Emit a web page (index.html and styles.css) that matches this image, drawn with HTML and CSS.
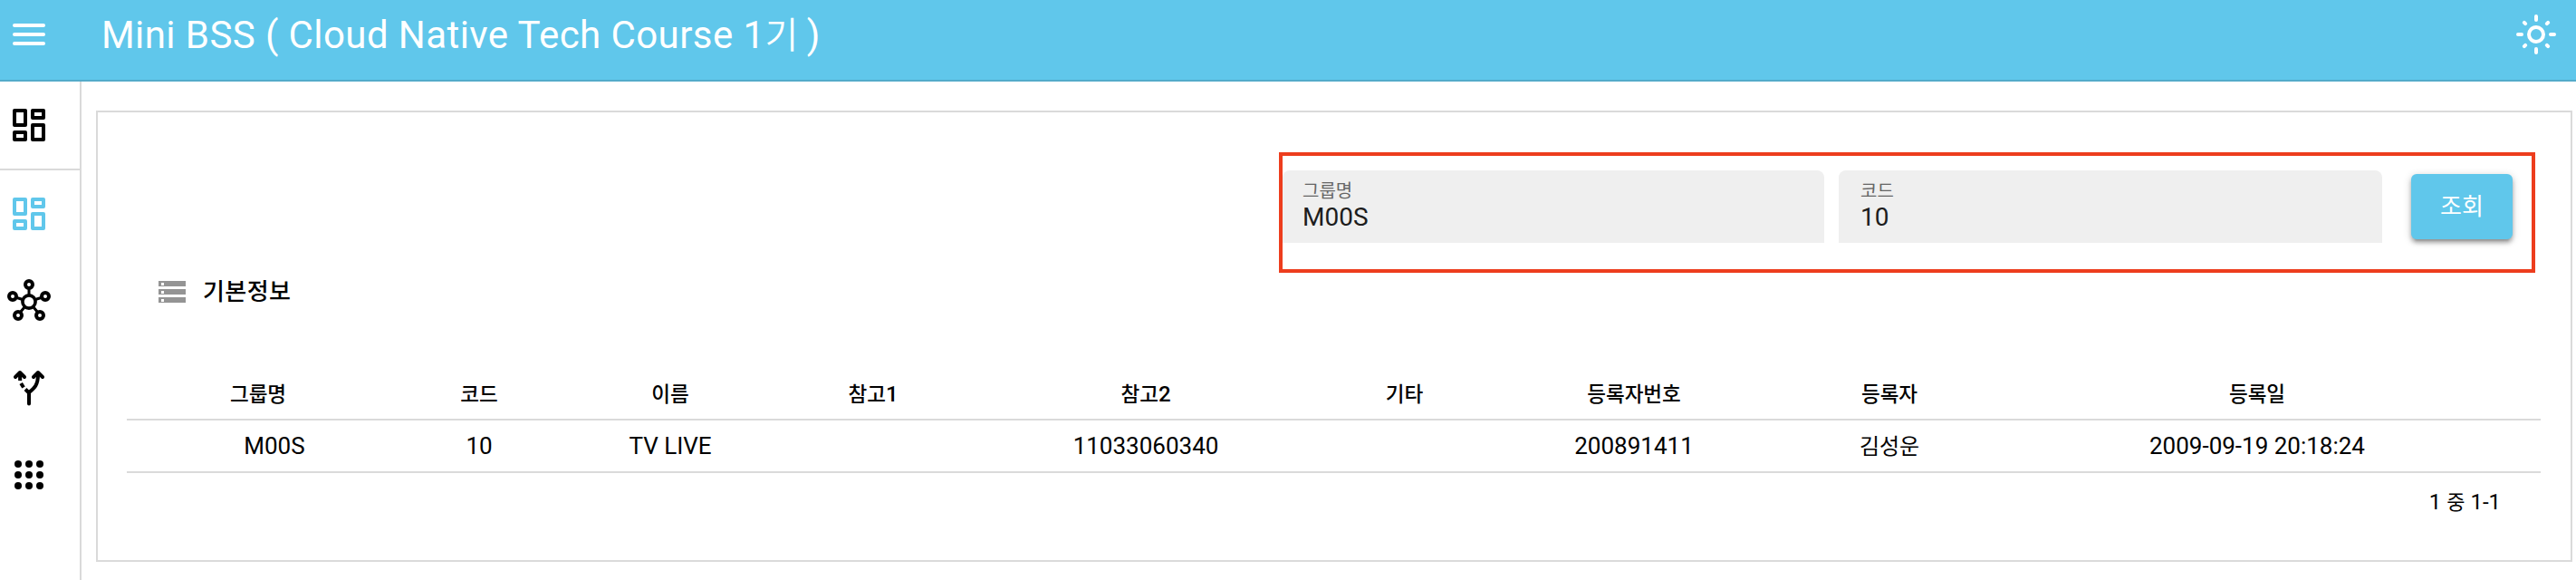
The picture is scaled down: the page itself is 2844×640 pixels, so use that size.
FILE: index.html
```html
<!DOCTYPE html>
<html lang="ko">
<head>
<meta charset="utf-8">
<title>Mini BSS</title>
<link rel="stylesheet" href="styles.css">
</head>
<body>
<svg width="0" height="0" class="defs">
  <symbol id="dash" viewBox="0 0 48 48">
    <g fill="none" stroke="currentColor" stroke-width="4" stroke-linejoin="round"><path d="M8 8h12v16H8zM28 8h12v8H28zM28 24h12v16H28zM8 32h12v8H8z"/></g>
  </symbol>
</svg>
<header class="bar">
  <svg class="icon" viewBox="0 0 48 48"><path d="M8 14h32M8 24h32M8 34h32" stroke="#fff" stroke-width="4" stroke-linecap="round"/></svg>
  <h1 class="title">Mini BSS ( Cloud Native Tech Course 1<span class="title-ko">기</span> )</h1>
  <svg class="icon" viewBox="0 0 48 48"><g fill="none" stroke="#fff" stroke-width="4" stroke-linecap="round"><circle cx="24" cy="24" r="8"/><path d="M24 4v4M24 40v4M4 24h4M40 24h4M10.9 10.9l1.2 1.2M35.9 35.9l1.2 1.2M37.1 10.9l-1.2 1.2M12.1 35.9l-1.2 1.2"/></g></svg>
</header>
<div class="body">
  <nav class="side">
    <a class="item first"><svg class="icon"><use href="#dash"/></svg></a>
    <a class="item active"><svg class="icon"><use href="#dash"/></svg></a>
    <a class="item"><svg class="icon" viewBox="0 0 48 48"><g fill="none" stroke="#000" stroke-width="4"><path d="M24 10v8M9 20l8 2.5M39 20l-8 2.5M14 37l5-6M34 37l-5-6" stroke-width="3"/><circle cx="24" cy="25" r="7.1" stroke-width="3.6"/><circle cx="24" cy="6" r="4"/><circle cx="6" cy="19" r="4"/><circle cx="42" cy="19" r="4"/><circle cx="12" cy="40" r="4"/><circle cx="36" cy="40" r="4"/></g></svg></a>
    <a class="item"><svg class="icon" viewBox="0 0 48 48"><g fill="none" stroke="#000" stroke-width="4" stroke-linecap="round" stroke-linejoin="round"><path d="M24 41.5V29C30 24 34 21 34 9"/><path d="M9 12l5-5 5 5M29 12l5-5 5 5"/><path d="M14 8L14.200 16M15.200 19L18 23.500M20 25.500L24 29.500" stroke-linecap="butt"/></g></svg></a>
    <a class="item"><svg class="icon" viewBox="0 0 48 48"><g fill="#000"><circle cx="12" cy="12" r="4"/><circle cx="24" cy="12" r="4"/><circle cx="36" cy="12" r="4"/><circle cx="12" cy="24" r="4"/><circle cx="24" cy="24" r="4"/><circle cx="36" cy="24" r="4"/><circle cx="12" cy="36" r="4"/><circle cx="24" cy="36" r="4"/><circle cx="36" cy="36" r="4"/></g></svg></a>
  </nav>
  <main class="card">
    <form class="search">
      <label class="field"><span class="label">그룹명</span><span class="value">M00S</span></label>
      <label class="field"><span class="label">코드</span><span class="value">10</span></label>
      <button class="btn" type="button">조회</button>
    </form>
    <h2 class="section">
      <svg class="list" viewBox="0 0 30 24"><path fill="#949494" d="M0 0h30v6H0zM0 9h30v6H0zM0 18h30v6H0z"/><path fill="#fff" d="M3 2h3v3H3zM3 11h3v3H3zM3 20h3v3H3z"/></svg>
      <span>기본정보</span>
    </h2>
    <table class="grid">
      <colgroup><col class="c1"><col class="c2"><col class="c3"><col class="c4"><col class="c5"><col class="c6"><col class="c7"><col class="c8"><col class="c9"></colgroup>
      <thead><tr><th>그룹명</th><th>코드</th><th>이름</th><th>참고<b>1</b></th><th>참고<b>2</b></th><th>기타</th><th>등록자번호</th><th>등록자</th><th>등록일</th></tr></thead>
      <tbody><tr><td>M00S</td><td>10</td><td>TV LIVE</td><td></td><td>11033060340</td><td></td><td>200891411</td><td><span class="name">김성운</span></td><td>2009-09-19 20:18:24</td></tr></tbody>
    </table>
    <div class="pager">1 <span class="pager-ko">중</span> 1-1</div>
  </main>
</div>
</body>
</html>
```
FILE: styles.css
```css
* { box-sizing: border-box; }
body {
  margin: 0;
  height: 640px;
  overflow: hidden;
  display: flex;
  flex-direction: column;
  background: #fff;
  color: #000;
  font-family: Roboto, "Noto Sans CJK KR", sans-serif;
}
.defs { position: absolute; }
.icon { display: block; width: 48px; height: 48px; flex: none; }
.bar {
  flex: none;
  display: flex;
  align-items: flex-start;
  height: 90px;
  padding: 14px 20px 0 8px;
  background: #60c7eb;
  border-bottom: 2px solid #54abca;
  color: #fff;
}
.title {
  flex: 1;
  margin: 1px 0 0 56px;
  font-size: 42px;
  line-height: 48px;
  font-weight: 400;
  letter-spacing: .42px;
  white-space: nowrap;
}
.title-ko { font-size: 40px; font-weight: 350; line-height: 1; letter-spacing: -1.4px; }
.body { flex: 1; display: flex; min-height: 0; }
.side { flex: none; width: 90px; border-right: 2px solid #dadada; }
.item { display: flex; align-items: center; height: 96px; padding-left: 8px; color: #000; }
.first { height: 98px; border-bottom: 2px solid #dadada; }
.active { color: #60c7eb; }
.card {
  flex: none;
  width: 2734px;
  height: 498px;
  margin: 32px 0 0 16px;
  padding: 44px 32px 0;
  border: 2px solid #dadada;
}
.search {
  display: flex;
  align-items: flex-start;
  gap: 16px;
  width: 1387px;
  height: 133px;
  margin-left: 1272px;
  padding: 16px 0 0;
  border: 4px solid #ed3d1d;
}
.field {
  display: flex;
  flex-direction: column;
  width: 600px;
  height: 80px;
  padding: 11px 0 0 24px;
  border-radius: 8px 8px 0 0;
  background: #efefef;
}
.field:first-child { width: 598px; padding-left: 22px; }
.label { font-size: 20px; line-height: 24px; color: #666; font-weight: 400; }
.value { font-size: 28px; line-height: 34px; color: #1d1d1d; }
.btn {
  width: 112px;
  height: 72px;
  margin: 4px 0 0 16px;
  padding: 0;
  border: 0;
  border-radius: 6px;
  background: #60c7eb;
  color: #fff;
  font: 400 26px/72px Roboto, "Noto Sans CJK KR", sans-serif;
  box-shadow: 0 2px 10px rgba(0,0,0,.2), 0 4px 4px rgba(0,0,0,.24), 0 6px 2px -4px rgba(0,0,0,.12);
}
.section {
  display: flex;
  align-items: center;
  gap: 19px;
  height: 40px;
  margin: 1px 0 0 35px;
  font-size: 26px;
  font-weight: 500;
}
.section span { margin-top: -5px; letter-spacing: .4px; }
.list { width: 30px; height: 24px; }
.grid { width: 2665px; margin-top: 62px; table-layout: fixed; border-collapse: separate; border-spacing: 0; }
.grid th, .grid td { padding: 0; text-align: center; border-bottom: 2px solid #dadada; }
.grid th { height: 60px; padding-top: 3px; font-size: 22.5px; line-height: 30px; font-weight: 500; }
.grid th b { font-size: 24px; font-weight: 500; }
.grid td { height: 58px; font-size: 26px; line-height: 30px; }
.name { font-size: 24px; }
.grid td:first-child { padding-left: 36px; }
.grid th:last-child, .grid td:last-child { padding-right: 32px; }
.c1 { width: 290px; }
.c2 { width: 198px; }
.c3, .c4 { width: 224px; }
.c5 { width: 378px; }
.c6 { width: 193px; }
.c7 { width: 314px; }
.c8 { width: 250px; }
.c9 { width: 594px; }
.pager { margin: 16px 45px 0 0; text-align: right; font-size: 24px; line-height: 32px; }
.pager-ko { font-size: 22px; }
```
